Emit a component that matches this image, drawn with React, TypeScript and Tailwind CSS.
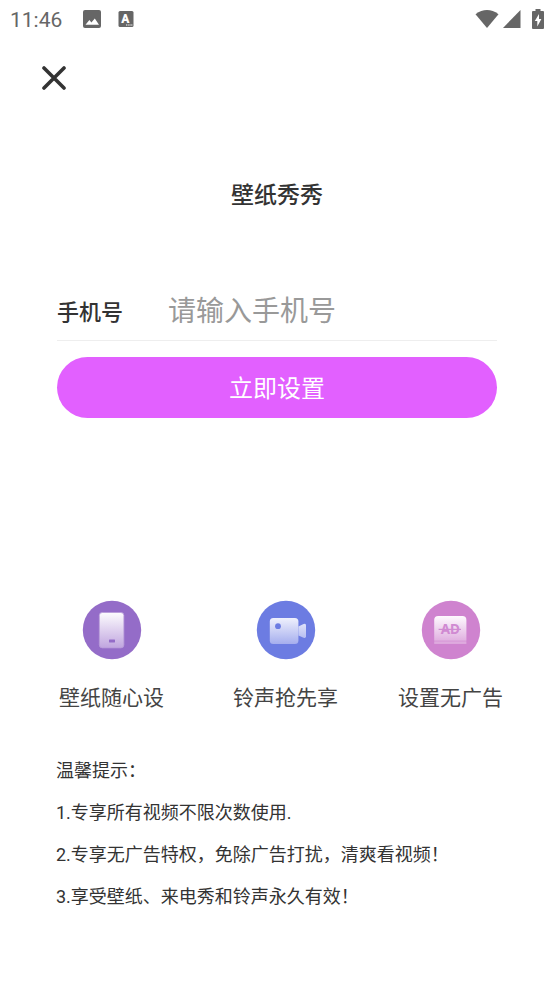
import { useState } from "react";

const TIPS = [
  "1.专享所有视频不限次数使用.",
  "2.专享无广告特权，免除广告打扰，清爽看视频！",
  "3.享受壁纸、来电秀和铃声永久有效！",
];

const FEATURES = [
  { label: "壁纸随心设", Icon: WallpaperIcon },
  { label: "铃声抢先享", Icon: VideoIcon },
  { label: "设置无广告", Icon: NoAdIcon },
];

function WallpaperIcon() {
  return (
    <svg viewBox="0 0 60 60" className="size-[60px]" aria-hidden="true">
      <defs>
        <linearGradient id="wallpaper-fill" x1="0" y1="0" x2="0" y2="1">
          <stop offset="0" stopColor="#fdfcfe" />
          <stop offset="1" stopColor="#c0a5df" />
        </linearGradient>
      </defs>
      <circle cx="30" cy="30" r="29.2" fill="#946cc8" />
      <rect x="17.3" y="12.5" width="24.6" height="35.4" rx="3" fill="url(#wallpaper-fill)" stroke="#b79ad9" strokeWidth="0.8" />
      <rect x="27" y="39.6" width="6" height="2.8" rx="0.4" fill="#946cc8" />
    </svg>
  );
}

function VideoIcon() {
  return (
    <svg viewBox="0 0 60 60" className="size-[60px]" aria-hidden="true">
      <defs>
        <linearGradient id="video-fill" gradientUnits="userSpaceOnUse" x1="0" y1="17" x2="0" y2="44">
          <stop offset="0" stopColor="#f2f3fd" />
          <stop offset="1" stopColor="#a5aeee" />
        </linearGradient>
      </defs>
      <circle cx="30" cy="30" r="29.2" fill="#6c7ce2" />
      <g fill="url(#video-fill)">
        <rect x="13.8" y="17.9" width="28.6" height="26" rx="3.5" />
        <path d="M42.4 26.6 47.6 24Q50 23 50 25.2V36.2Q50 38.6 47.6 37.8L42.4 35.4Z" />
      </g>
      <circle cx="22" cy="26.2" r="2.9" fill="#6c7ce2" />
    </svg>
  );
}

function NoAdIcon() {
  return (
    <svg viewBox="0 0 60 60" className="size-[60px]" aria-hidden="true">
      <defs>
        <linearGradient id="ad-fill" x1="0" y1="0" x2="0" y2="1">
          <stop offset="0" stopColor="#fefafe" />
          <stop offset="1" stopColor="#e0b0e0" />
        </linearGradient>
      </defs>
      <circle cx="30" cy="30" r="29.2" fill="#cf83cf" />
      <path d="M13.2 40.8V20Q13.2 16 17.2 16H41.4Q45.4 16 45.4 20V40.8Z" fill="url(#ad-fill)" />
      <rect x="13.2" y="41.3" width="32.2" height="2.6" fill="#deaade" />
      <text
        x="29.4"
        y="34"
        textAnchor="middle"
        fontSize="13.5"
        fontWeight="700"
        fill="#d08ad2"
        className="font-['Noto_Sans',sans-serif]"
      >
        AD
      </text>
      <path d="M17.6 29.4H40" stroke="#d08ad2" strokeWidth="1.2" />
    </svg>
  );
}

function StatusBar() {
  return (
    <header className="flex h-[38px] items-center justify-between px-2.5 text-[#666]">
      <div className="flex items-center">
        <time className="pt-0.5 font-['Roboto',sans-serif] text-[21px] leading-6">11:46</time>
        <svg viewBox="0 0 18 18" className="ml-[21px] size-[18px]" aria-hidden="true">
          <rect width="18" height="18" rx="2" fill="currentColor" />
          <path d="M2.5 14.8 6.4 10 8.4 12.6 11.8 8.4 16 14.8Z" fill="#fff" />
        </svg>
        <svg viewBox="0 0 16 16" className="ml-[17px] size-4" aria-hidden="true">
          <rect x="0.5" width="15" height="16" rx="1.5" fill="currentColor" />
          <text
            x="7.4"
            y="11.6"
            textAnchor="middle"
            fontSize="12"
            fontWeight="900"
            fill="#fff"
            className="font-['Roboto',sans-serif]"
          >
            A
          </text>
          <path d="M8 14H15" stroke="#fff" strokeWidth="1" strokeDasharray="1.4 0.8" />
        </svg>
      </div>
      <div className="flex items-center">
        <svg viewBox="0 0 24 18" className="h-[18px] w-6" fill="currentColor" aria-hidden="true">
          <path d="M0.5 4.2Q12-4 23.5 4.2L12 18Z" />
        </svg>
        <svg viewBox="0 0 18 18" className="ml-1 size-[18px]" fill="currentColor" aria-hidden="true">
          <path d="M0 18 17.5 0V18Z" />
        </svg>
        <svg viewBox="0 0 12 20" className="ml-[11px] h-5 w-3" aria-hidden="true">
          <path d="M3.5 0H8.5V2H11Q12 2 12 3V19Q12 20 11 20H1Q0 20 0 19V3Q0 2 1 2H3.5Z" fill="currentColor" />
          <path d="M7 5 2.8 12H5.3V17.4L9.4 10H7Z" fill="#fff" />
        </svg>
      </div>
    </header>
  );
}

export default function App() {
  const [phone, setPhone] = useState("");

  return (
    <div className="min-h-screen bg-white font-['Roboto','Noto_Sans_CJK_SC',sans-serif] text-[#333]">
      <StatusBar />

      <button type="button" aria-label="关闭" className="ml-[34px] mt-5 block size-10 p-2">
        <svg viewBox="0 0 24 24" className="size-6" aria-hidden="true">
          <path d="M2 2 22 22M22 2 2 22" stroke="#333" strokeWidth="3.6" strokeLinecap="round" />
        </svg>
      </button>

      <main>
        <h1 className="mt-[82px] text-center text-[23px] font-medium leading-8">壁纸秀秀</h1>

        <form className="mx-[57px] mt-[75px]" onSubmit={(e) => e.preventDefault()}>
          <div className="flex items-center border-b border-[#eee] pb-[5px]">
            <label htmlFor="phone" className="w-[111px] shrink-0 pt-1 text-[22px] font-medium leading-8">
              手机号
            </label>
            <input
              id="phone"
              type="tel"
              value={phone}
              onChange={(e) => setPhone(e.target.value)}
              placeholder="请输入手机号"
              className="h-12 min-w-0 flex-1 text-[28px] outline-none placeholder:text-[#999]"
            />
          </div>
          <button
            type="submit"
            className="mt-4 h-[61px] w-full rounded-full bg-[#e260ff] pt-0.5 text-[24px] text-white"
          >
            立即设置
          </button>
        </form>

        <ul className="mt-[182px] grid grid-cols-[174fr_165fr_auto] pl-[59px] pr-[51px]">
          {FEATURES.map(({ label, Icon }) => (
            <li key={label} className="flex w-fit flex-col items-center gap-[22px]">
              <Icon />
              <span className="text-[21px] leading-8 text-[#444]">{label}</span>
            </li>
          ))}
        </ul>

        <section className="mx-14 mt-9 pb-12 text-[18px] leading-[42px]">
          <h2>温馨提示：</h2>
          {TIPS.map((tip) => (
            <p key={tip}>{tip}</p>
          ))}
        </section>
      </main>
    </div>
  );
}
